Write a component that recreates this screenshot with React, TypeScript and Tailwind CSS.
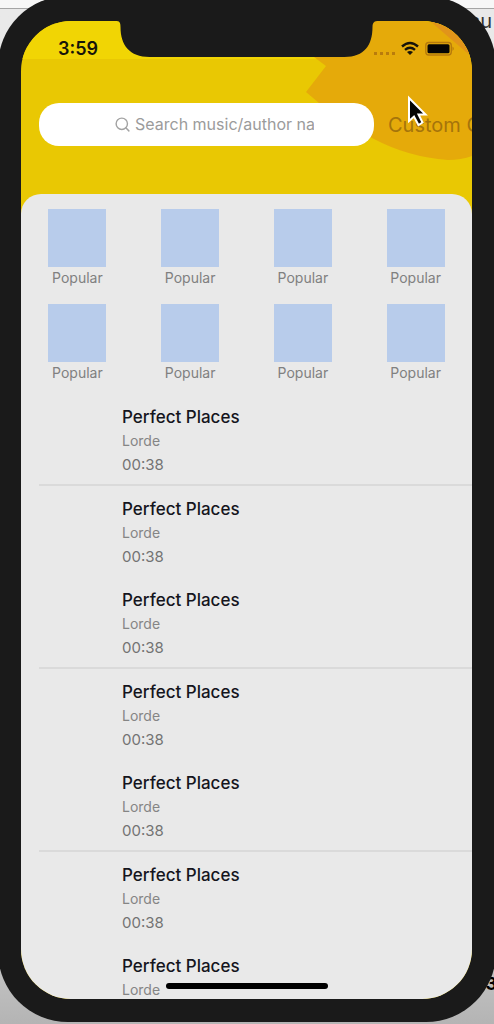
import React from 'react';
import { Search } from 'lucide-react';

interface Song {
  id: number;
  title: string;
  artist: string;
  duration: string;
}

const categories = Array.from({ length: 8 }, (_, id) => ({ id, label: 'Popular' }));

const songs: Song[] = Array.from({ length: 7 }, (_, id) => ({
  id,
  title: 'Perfect Places',
  artist: 'Lorde',
  duration: '00:38',
}));

function HeaderArt() {
  return (
    <svg
      className="absolute top-0 right-0 pointer-events-none"
      width="172"
      height="173"
      viewBox="300 21 172 173"
      aria-hidden="true"
    >
      <path
        d="M300 21H472V156Q461 160 448 160Q408 157 374 139Q350 128 319 103L306 92L326 66L314 57Z"
        fill="#e5aa0a"
      />
      <path d="M430 21L445 34L472 57V21Z" fill="#e1941a" />
    </svg>
  );
}

function Notch() {
  return (
    <svg
      className="absolute top-0 left-1/2 -translate-x-1/2"
      width="263"
      height="38"
      viewBox="0 0 263 38"
      aria-hidden="true"
    >
      <path
        d="M0 -2V0C4 0 5 1 5 6C5 24 14 36 34 36H229C249 36 257 24 257 6C257 1 259 0 263 0V-2Z"
        fill="#1a1a1a"
      />
    </svg>
  );
}

function StatusIcons() {
  return (
    <svg width="82" height="18" viewBox="373 39 82 18" role="img" aria-label="Wi-Fi connected, battery full">
      <g fill="#b97c0c">
        <rect x="374" y="52" width="3" height="3" />
        <rect x="380" y="52" width="3" height="3" />
        <rect x="386" y="52" width="3" height="3" />
        <rect x="392" y="52" width="3" height="3" />
      </g>
      <g fill="none" stroke="#17130a" strokeWidth="2.400">
        <path d="M402 46.500Q410 39.500 418 46.500" />
        <path d="M405 49.800Q410 45.500 415 49.800" />
      </g>
      <path d="M407 52Q410 49.800 413 52L410 55Z" fill="#17130a" />
      <rect x="425.800" y="42.500" width="25.500" height="12.500" rx="3" fill="none" stroke="#b5790c" strokeWidth="1.300" />
      <rect x="427.500" y="44.200" width="22" height="9" rx="1.500" fill="#050505" />
      <path d="M452.500 46.500Q455 48.500 452.500 51Z" fill="#b5790c" />
    </svg>
  );
}

function Cursor() {
  return (
    <svg
      className="absolute top-[95px] right-[60px] z-20 pointer-events-none"
      width="28"
      height="32"
      viewBox="406 95 28 32"
      aria-hidden="true"
    >
      <path
        d="M409 98V121L414 116.500L418.500 125L422.500 122.500L418.500 114.500H425.500Z"
        fill="#050505"
        stroke="#fff"
        strokeWidth="2"
      />
    </svg>
  );
}

function CategoryTile({ label }: { label: string }) {
  return (
    <button type="button" className="flex flex-col items-center">
      <span className="size-[58px] bg-[#b8cceb]" />
      <span className="text-[14px] leading-[22px] text-[#808080]">{label}</span>
    </button>
  );
}

function SongRow({ song, divided }: { song: Song; divided: boolean }) {
  const rowClass = divided ? 'h-[92px] border-b-2 border-[#dadada]' : 'h-[91px]';

  return (
    <li className={`ml-[18px] pl-[83px] pt-[11px] ${rowClass}`}>
      <h2 className="text-[17px] leading-6 font-medium text-[#15151d]">{song.title}</h2>
      <p className="text-[14px] leading-6 text-[#858585]">{song.artist}</p>
      <p className="text-[15px] leading-6 text-[#737373]">{song.duration}</p>
    </li>
  );
}

export default function App() {
  return (
    <div className="relative flex flex-col h-screen overflow-hidden bg-linear-to-b from-[#e9e9e9] from-80% to-[#b4b4b4] font-['Inter','Liberation_Sans',sans-serif]">
      {/* Window behind the device */}
      <div className="absolute top-0 inset-x-0 h-[9px] bg-[#f7f7f7] border-b border-[#a5a5a5]" />
      <span className="absolute top-[9px] right-0.5 text-[20px] leading-6 text-[#333]">su</span>
      <span className="absolute bottom-7 right-[-3px] text-[18px] leading-6 font-bold text-black">3</span>

      <div className="relative flex-1 min-h-0 -mx-0.5 -mt-1 mb-0.5 pt-[25px] pb-[23px] pl-[23px] pr-6 rounded-[70px] bg-[#1a1a1a]">
        <div className="relative flex flex-col h-full overflow-hidden rounded-[50px] bg-[#e9c803]">
          <div className="h-[38px] bg-[#f1d504]" />
          <HeaderArt />
          <div className="absolute top-0 inset-x-0 flex justify-between items-start pt-[18px] pl-[37px] pr-[17px]">
            <time className="text-[18px] leading-5 font-semibold text-[#17150a]">3:59</time>
            <StatusIcons />
          </div>
          <Notch />

          <header className="relative flex items-center pt-11 pb-12 pl-[18px]">
            <label className="flex flex-1 min-w-0 items-center justify-center gap-1 h-[43px] rounded-[20px] bg-white pl-[30px]">
              <Search className="size-[17px] shrink-0 text-[#a3a3a3]" strokeWidth={2} />
              <input
                type="search"
                aria-label="Search music or author"
                placeholder="Search music/author na"
                className="w-[194px] pb-0.5 text-[16px] leading-5 text-[#555] placeholder:text-[#9b9b9b] outline-none"
              />
            </label>
            <button
              type="button"
              className="w-[98px] pl-3.5 overflow-hidden whitespace-nowrap text-left text-[20px] leading-6 text-[#a5740b]"
            >
              Custom C
            </button>
          </header>

          <main className="relative flex-1 min-h-0 overflow-hidden rounded-t-[20px] bg-[#e9e9e9] pt-[15px]">
            <div className="grid grid-cols-4 gap-y-[15px]">
              {categories.map((category) => (
                <CategoryTile key={category.id} label={category.label} />
              ))}
            </div>
            <ul className="mt-2.5">
              {songs.map((song, index) => (
                <SongRow key={song.id} song={song} divided={index % 2 === 0} />
              ))}
            </ul>
          </main>

          {/* Home indicator */}
          <div className="absolute bottom-[10px] left-1/2 -translate-x-1/2 w-[162px] h-1.5 rounded-full bg-black" />
        </div>
      </div>

      <Cursor />
    </div>
  );
}
